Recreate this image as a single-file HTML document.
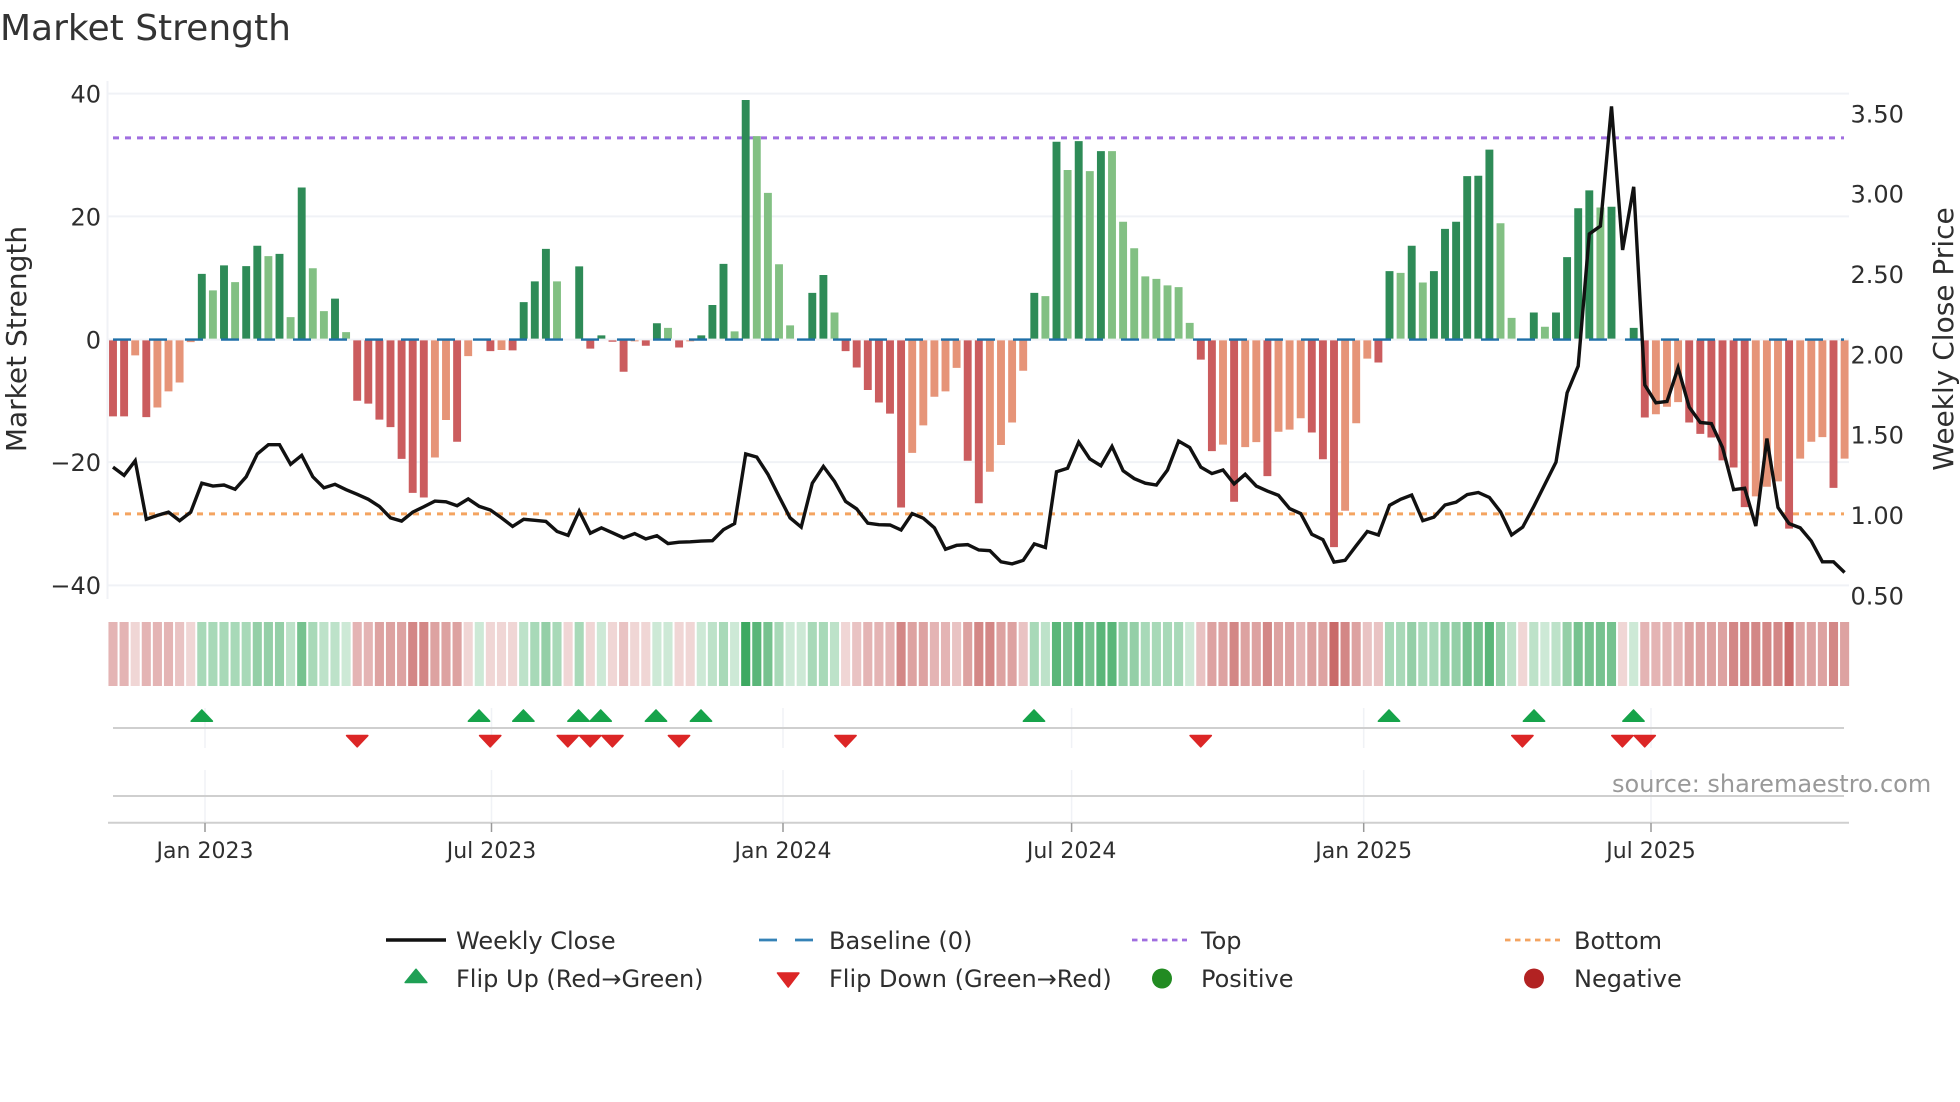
<!DOCTYPE html>
<html>
<head>
<meta charset="utf-8">
<title>Market Strength</title>
<style>
html,body{margin:0;padding:0;background:#fff;width:1960px;height:1102px;overflow:hidden}
svg{display:block}
text{font-family:"DejaVu Sans","Liberation Sans",sans-serif;fill:#2e2e2e}
.v{vector-effect:non-scaling-stroke;fill:none}
.b{stroke-width:7.9}
.h{stroke-width:9.1}
</style>
</head>
<body>
<svg width="1960" height="1102" viewBox="0 0 1960 1102" xmlns="http://www.w3.org/2000/svg">
<defs>
<polygon id="u" points="0,710 10.6,721.2 -10.6,721.2"/>
<polygon id="d" points="-10.6,735.6 10.6,735.6 0,746.8"/>
</defs>
<rect width="1960" height="1102" fill="#fff"/>

<text x="0" y="40" font-size="36" style="fill:#333">Market Strength</text>

<!-- grid -->
<g stroke="#f0f2f6" stroke-width="2" fill="none">
<path d="M107.5 81V599"/>
<path d="M108 93.6H1849M108 216.4H1849M108 339.6H1849M108 462.1H1849M108 585.4H1849"/>
</g>

<!-- top/bottom -->
<path d="M113 137.9H1844" stroke="#a06ee0" stroke-width="3" stroke-dasharray="6 6" fill="none"/>
<path d="M113 513.9H1844" stroke="#f4a460" stroke-width="3" stroke-dasharray="6 6" fill="none"/>

<!-- bars -->
<g transform="translate(113,60) scale(11.1,0.35714)">
<path class="v b" stroke="#2e8b57" d="M8 780V599M10 780V575M12 780V577M13 780V520M15 780V543M17 780V357M20 780V668M37 780V678M38 780V620M39 780V529M42 780V578M44 780V771M49 780V737M53 780V771M54 780V686M55 780V571M57 780V112M63 780V652M64 780V602M83 780V652M85 780V229M87 780V227M89 780V255M115 780V591M117 780V520M119 780V591M120 780V473M121 780V453M122 780V325M123 780V324M124 780V251M128 780V707M130 780V707M131 780V552M132 780V415M133 780V365M135 780V411M137 780V750"/>
<path class="v b" stroke="#82c083" d="M9 780V645M11 780V622M14 780V549M16 780V720M18 780V583M19 780V703M21 780V762M40 780V620M50 780V750M56 780V760M58 780V213M59 780V372M60 780V572M61 780V743M65 780V707M84 780V661M86 780V308M88 780V311M90 780V255M91 780V453M92 780V527M93 780V606M94 780V613M95 780V631M96 780V636M97 780V736M116 780V596M118 780V623M125 780V457M126 780V722M129 780V747M134 780V413"/>
<path class="v b" stroke="#cb5c5e" d="M0 785V998M1 785V998M3 785V1000M22 785V954M23 785V962M24 785V1007M25 785V1028M26 785V1117M27 785V1212M28 785V1225M31 785V1069M34 785V815M36 785V813M43 785V808M45 785V789M46 785V873M48 785V800M51 785V805M66 785V815M67 785V861M68 785V924M69 785V959M70 785V990M71 785V1253M77 785V1122M78 785V1241M98 785V839M99 785V1095M101 785V1237M104 785V1165M108 785V1043M109 785V1118M110 785V1364M114 785V847M138 785V1001M142 785V1015M143 785V1047M144 785V1057M145 785V1121M146 785V1141M147 785V1252M151 785V1312M155 785V1198"/>
<path class="v b" stroke="#e69478" d="M2 785V827M4 785V973M5 785V928M6 785V903M7 785V790M29 785V1113M30 785V1008M32 785V829M35 785V812M47 785V788M52 785V788M72 785V1100M73 785V1023M74 785V943M75 785V928M76 785V862M79 785V1153M80 785V1078M81 785V1015M82 785V870M100 785V1077M102 785V1084M103 785V1070M105 785V1041M106 785V1035M107 785V1003M111 785V1262M112 785V1017M113 785V836M139 785V992M140 785V971M141 785V958M148 785V1222M149 785V1195M150 785V1180M152 785V1116M153 785V1069M154 785V1056M156 785V1116"/>
</g>

<!-- baseline -->
<path d="M113 339.6H1844" stroke="#1f6fa8" stroke-width="2.4" stroke-dasharray="18 18" fill="none"/>

<!-- weekly close -->
<g transform="translate(113,60) scale(11.1,0.35714)">
<polyline class="v" stroke="#111" stroke-width="3.4" points="0,1140 1,1163 2,1122 3,1286 4,1275 5,1266 6,1290 7,1266 8,1185 9,1193 10,1190 11,1202 12,1167 13,1103 14,1077 15,1077 16,1132 17,1107 18,1167 19,1198 20,1188 21,1203 22,1216 23,1230 24,1250 25,1282 26,1291 27,1266 28,1251 29,1235 30,1237 31,1248 32,1229 33,1250 34,1260 35,1282 36,1306 37,1286 38,1289 39,1292 40,1320 41,1331 42,1263 43,1325 44,1310 45,1324 46,1338 47,1326 48,1341 49,1332 50,1354 51,1350 52,1349 53,1347 54,1346 55,1315 56,1298 57,1103 58,1112 59,1160 60,1222 61,1282 62,1308 63,1185 64,1138 65,1180 66,1236 67,1257 68,1297 69,1301 70,1302 71,1316 72,1270 73,1283 74,1310 75,1370 76,1359 77,1357 78,1372 79,1374 80,1405 81,1411 82,1401 83,1355 84,1365 85,1153 86,1143 87,1070 88,1117 89,1136 90,1082 91,1150 92,1172 93,1185 94,1190 95,1148 96,1067 97,1085 98,1140 99,1158 100,1148 101,1187 102,1160 103,1193 104,1207 105,1219 106,1256 107,1270 108,1328 109,1343 110,1406 111,1401 112,1360 113,1320 114,1330 115,1247 116,1230 117,1218 118,1290 119,1280 120,1246 121,1238 122,1217 123,1211 124,1225 125,1265 126,1330 127,1308 128,1250 129,1188 130,1126 131,932 132,857 133,487 134,465 135,130 136,532 137,355 138,910 139,960 140,956 141,862 142,972 143,1015 144,1018 145,1085 146,1203 147,1199 148,1305 149,1060 150,1253 151,1298 152,1310 153,1347 154,1405 155,1405 156,1435"/>
</g>

<!-- heat strip -->
<g transform="translate(113,622) scale(11.1,64)">
<path class="v h" stroke="#1b9a45" stroke-opacity=".22" d="M21 0V1M33 0V1M44 0V1M49 0V1M50 0V1M53 0V1M56 0V1M61 0V1M62 0V1M97 0V1M129 0V1M137 0V1"/>
<path class="v h" stroke="#1b9a45" stroke-opacity=".29" d="M16 0V1M19 0V1M20 0V1M37 0V1M54 0V1M65 0V1M84 0V1M126 0V1M128 0V1M130 0V1"/>
<path class="v h" stroke="#1b9a45" stroke-opacity=".38" d="M8 0V1M9 0V1M10 0V1M11 0V1M12 0V1M18 0V1M38 0V1M40 0V1M42 0V1M55 0V1M60 0V1M63 0V1M64 0V1M83 0V1M93 0V1M94 0V1M95 0V1M96 0V1M115 0V1M116 0V1M118 0V1M119 0V1"/>
<path class="v h" stroke="#1b9a45" stroke-opacity=".47" d="M13 0V1M14 0V1M15 0V1M39 0V1M91 0V1M92 0V1M117 0V1M120 0V1M121 0V1M125 0V1M131 0V1"/>
<path class="v h" stroke="#1b9a45" stroke-opacity=".6" d="M17 0V1M59 0V1M86 0V1M88 0V1M122 0V1M123 0V1M132 0V1M133 0V1M134 0V1M135 0V1"/>
<path class="v h" stroke="#1b9a45" stroke-opacity=".72" d="M58 0V1M85 0V1M87 0V1M89 0V1M90 0V1M124 0V1"/>
<path class="v h" stroke="#1b9a45" stroke-opacity=".85" d="M57 0V1"/>
<path class="v h" stroke="#b4302f" stroke-opacity=".2" d="M2 0V1M7 0V1M32 0V1M34 0V1M35 0V1M36 0V1M41 0V1M43 0V1M45 0V1M47 0V1M48 0V1M51 0V1M52 0V1M66 0V1M127 0V1M136 0V1"/>
<path class="v h" stroke="#b4302f" stroke-opacity=".29" d="M6 0V1M46 0V1M67 0V1M76 0V1M82 0V1M98 0V1M113 0V1M114 0V1"/>
<path class="v h" stroke="#b4302f" stroke-opacity=".36" d="M0 0V1M1 0V1M3 0V1M4 0V1M5 0V1M22 0V1M23 0V1M68 0V1M69 0V1M70 0V1M74 0V1M75 0V1M107 0V1M138 0V1M139 0V1M140 0V1M141 0V1"/>
<path class="v h" stroke="#b4302f" stroke-opacity=".45" d="M24 0V1M25 0V1M26 0V1M29 0V1M30 0V1M31 0V1M72 0V1M73 0V1M77 0V1M80 0V1M81 0V1M99 0V1M100 0V1M102 0V1M103 0V1M105 0V1M106 0V1M108 0V1M109 0V1M112 0V1M142 0V1M143 0V1M144 0V1M145 0V1M152 0V1M153 0V1M154 0V1M156 0V1"/>
<path class="v h" stroke="#b4302f" stroke-opacity=".58" d="M27 0V1M28 0V1M71 0V1M78 0V1M79 0V1M101 0V1M104 0V1M111 0V1M146 0V1M147 0V1M148 0V1M149 0V1M150 0V1M155 0V1"/>
<path class="v h" stroke="#b4302f" stroke-opacity=".72" d="M110 0V1M151 0V1"/>
</g>

<!-- lower panels -->
<g stroke="#f0f2f6" stroke-width="1.5" fill="none">
<path d="M205 708V748M205 770V823M491.5 708V748M491.5 770V823M783 708V748M783 770V823M1071.6 708V748M1071.6 770V823M1363.7 708V748M1363.7 770V823M1651 708V748M1651 770V823"/>
</g>
<g stroke="#cfcfcf" stroke-width="2" fill="none">
<path d="M113 728H1844M113 796H1844M108 822.7H1849"/>
</g>
<path d="M205 823V832M491.5 823V832M783 823V832M1071.6 823V832M1363.7 823V832M1651 823V832" stroke="#999" stroke-width="1.5" fill="none"/>

<!-- flips up -->
<g fill="#16a34a" stroke="#16a34a" stroke-width="1.6" stroke-linejoin="round">
<use href="#u" x="201.8"/>
<use href="#u" x="479"/>
<use href="#u" x="523.4"/>
<use href="#u" x="578.5"/>
<use href="#u" x="600.7"/>
<use href="#u" x="656"/>
<use href="#u" x="701"/>
<use href="#u" x="1034"/>
<use href="#u" x="1389"/>
<use href="#u" x="1534"/>
<use href="#u" x="1633.5"/>
</g>
<!-- flips down -->
<g fill="#dc2626" stroke="#dc2626" stroke-width="1.6" stroke-linejoin="round">
<use href="#d" x="357.2"/>
<use href="#d" x="490.2"/>
<use href="#d" x="567.8"/>
<use href="#d" x="590.2"/>
<use href="#d" x="612.4"/>
<use href="#d" x="679"/>
<use href="#d" x="845.5"/>
<use href="#d" x="1200.7"/>
<use href="#d" x="1522.4"/>
<use href="#d" x="1622.4"/>
<use href="#d" x="1644.7"/>
</g>

<!-- left ticks -->
<g font-size="24" text-anchor="end">
<text x="101" y="102.7">40</text>
<text x="101" y="225.4">20</text>
<text x="101" y="348.3">0</text>
<text x="101" y="470.8">−20</text>
<text x="101" y="594">−40</text>
</g>
<!-- right ticks -->
<g font-size="24">
<text x="1850.5" y="122.3">3.50</text>
<text x="1850.5" y="202.6">3.00</text>
<text x="1850.5" y="283">2.50</text>
<text x="1850.5" y="363.3">2.00</text>
<text x="1850.5" y="443.7">1.50</text>
<text x="1850.5" y="524">1.00</text>
<text x="1850.5" y="604.4">0.50</text>
</g>
<!-- axis titles -->
<text font-size="28" text-anchor="middle" transform="translate(26,339) rotate(-90)">Market Strength</text>
<text font-size="28" text-anchor="middle" transform="translate(1953,339) rotate(-90)">Weekly Close Price</text>

<!-- x ticks -->
<g font-size="22" text-anchor="middle">
<text x="205" y="858">Jan 2023</text>
<text x="491.5" y="858">Jul 2023</text>
<text x="783" y="858">Jan 2024</text>
<text x="1071.6" y="858">Jul 2024</text>
<text x="1363.7" y="858">Jan 2025</text>
<text x="1651" y="858">Jul 2025</text>
</g>

<text x="1612" y="792" font-size="24" style="fill:#999">source: sharemaestro.com</text>

<!-- legend -->
<path d="M386 940H446" stroke="#111" stroke-width="3.4" fill="none"/>
<path d="M759 940H814" stroke="#3582b6" stroke-width="2.8" stroke-dasharray="18 18" fill="none"/>
<path d="M1132 940H1187" stroke="#a06ee0" stroke-width="2.8" stroke-dasharray="5.5 4.5" fill="none"/>
<path d="M1505 940H1560" stroke="#f4a460" stroke-width="2.8" stroke-dasharray="5.5 4.5" fill="none"/>
<polygon points="416,969.3 426.8,982.5 405.2,982.5" fill="#1fa055" stroke="#1fa055" stroke-width="1.6" stroke-linejoin="round"/>
<polygon points="777.5,973 798.9,973 788.2,987" fill="#dc2626" stroke="#dc2626" stroke-width="1.6" stroke-linejoin="round"/>
<circle cx="1162" cy="978.5" r="10" fill="#228b22"/>
<circle cx="1534" cy="978.5" r="10" fill="#b22222"/>
<g font-size="24">
<text x="456" y="949">Weekly Close</text>
<text x="829" y="949">Baseline (0)</text>
<text x="1201" y="949">Top</text>
<text x="1574" y="949">Bottom</text>
<text x="456" y="987">Flip Up (Red→Green)</text>
<text x="829" y="987">Flip Down (Green→Red)</text>
<text x="1201" y="987">Positive</text>
<text x="1574" y="987">Negative</text>
</g>
</svg>
</body>
</html>
